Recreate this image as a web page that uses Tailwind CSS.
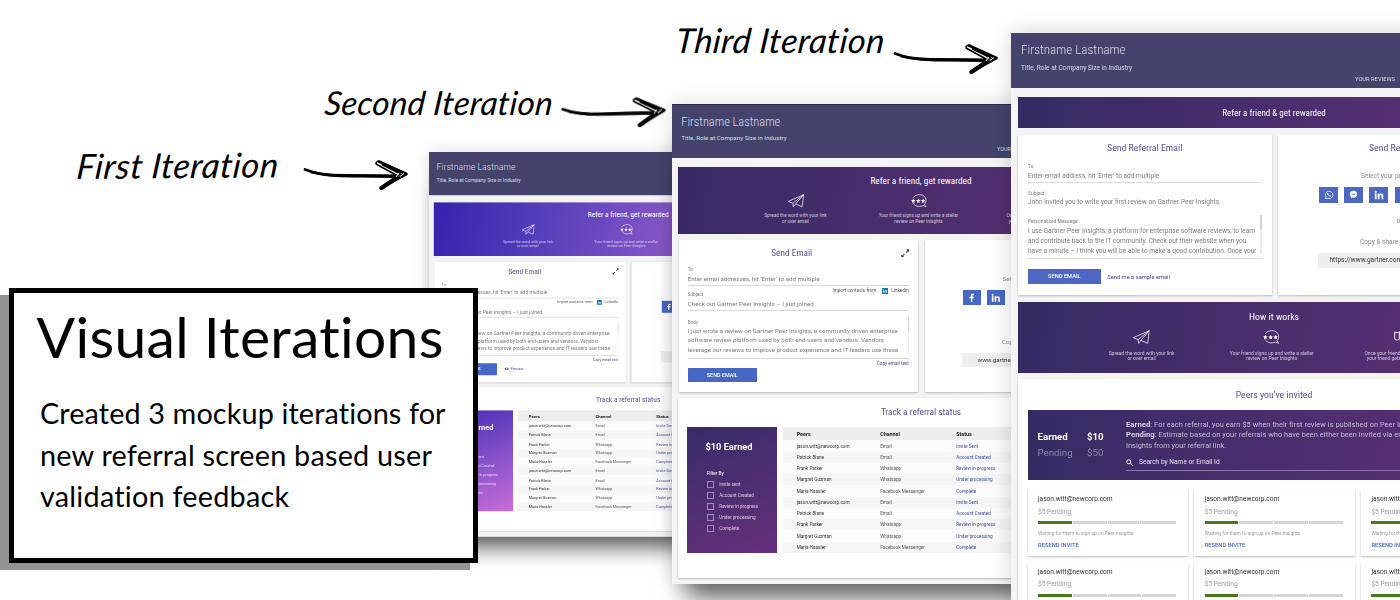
<!DOCTYPE html>
<html lang="en">
<head>
<meta charset="utf-8">
<title>Visual Iterations</title>
<script src="https://cdn.jsdelivr.net/npm/@tailwindcss/browser@4"></script>
</head>
<body class="relative h-[600px] w-[1400px] overflow-hidden bg-white font-[Roboto,sans-serif] text-[#7c7c7c]">

<svg class="hidden">
  <symbol id="plane" viewBox="-1 -1 50 42"><path d="M48 1 0 22l14 6L48 1l-5 38-20-9L48 1M14 28l2 11 7-9" fill="none" stroke="#fff" stroke-width="2.2" stroke-linejoin="round"/></symbol>
  <symbol id="chat" viewBox="-1 -1 50 42">
    <path d="M5 11C10 4 18 1 26 1c12 0 20 8 20 18 0 5-2 9-5 12l5 8-9-4c-14 6-26 2-32-8" fill="none" stroke="#fff" stroke-width="2.2"/>
    <path d="m6 13 2 5 5 .500-4 3.500 1.500 5L6 24.500 1.500 27 3 22l-4-3.500 5-.500zM22 13l2 5 5 .500-4 3.500 1.500 5-4.500-2.500-4.500 2.500L19 22l-4-3.500 5-.500zM37 13l2 5 5 .500-4 3.500 1.500 5-4.500-2.500-4.500 2.500L34 22l-4-3.500 5-.500z" fill="#fff"/>
  </symbol>
  <symbol id="reward" viewBox="-1 -1 50 42"><path d="M1 5c6 3 9 3 14-1v22c-5 4-8 4-14 1zM15 10l14-5 16 8-3 18-16 7-11-10M22 16l10 14" fill="none" stroke="#fff" stroke-width="2.800"/></symbol>
  <symbol id="expand" viewBox="0 0 24 24"><path d="M15 1h8v8l-3-3-5 5-2-2 5-5zM9 23H1v-8l3 3 5-5 2 2-5 5z" fill="#333"/></symbol>
  <symbol id="facebook" viewBox="0 0 24 24"><path d="M13.600 22v-9h3.200l.500-3.800h-3.700V7.100c0-1.100.400-1.700 1.900-1.700h2V2.200C17 2.100 16 2 14.700 2 11.600 2 9.600 3.700 9.600 6.800v2.400H6.500V13h3.100v9z" fill="#fff"/></symbol>
  <symbol id="linkedin" viewBox="0 0 24 24"><path d="M2 8.500h4.300V22H2zM4.100 2a2.500 2.500 0 1 1 0 5 2.500 2.500 0 0 1 0-5zM9 8.500h4.100v1.900c.700-1.200 2.200-2.200 4.200-2.200 4.200 0 5 2.600 5 6.200V22H18v-6.700c0-1.700 0-3.500-2.200-3.500s-2.500 1.700-2.500 3.400V22H9z" fill="#fff"/></symbol>
  <symbol id="whatsapp" viewBox="0 0 24 24"><path d="m3 21 1.400-4.800A9 9 0 1 1 8 19.800z" fill="none" stroke="#fff" stroke-width="1.800"/><path d="M8.500 7.200c-1.600 1-1 3.500 1.300 6 2.500 2.500 5.200 3.500 6.500 1.900.400-.700.300-1.300 0-1.500l-2-1-1.300 1.200c-1.300-.600-2.300-1.500-2.900-2.800l1-1.100-.900-2.300c-.300-.600-1-.700-1.700-.400z" fill="#fff"/></symbol>
  <symbol id="messenger" viewBox="0 0 24 24"><path d="M12 2C6.300 2 2 6.100 2 11.300c0 2.900 1.300 5.300 3.500 7V22l3.200-1.800c1 .300 2.100.400 3.300.400 5.700 0 10-4.100 10-9.300S17.700 2 12 2z" fill="#fff"/><path d="m5.800 14 5-5.300 2.600 2.400 4.800-2.400-5 5.300-2.600-2.500z" fill="#4667c4"/></symbol>
  <symbol id="eye" viewBox="0 0 24 16"><path d="M0 8C5-1 19-1 24 8c-5 9-19 9-24 0z" fill="#7e57b5"/><circle cx="12" cy="8" r="3" fill="#fff"/></symbol>
  <symbol id="search" viewBox="0 0 24 24"><circle cx="9" cy="9" r="6.500" fill="none" stroke="#fff" stroke-width="3"/><path d="m14 14 8 8" stroke="#fff" stroke-width="3.500"/></symbol>
  <symbol id="arrow" viewBox="0 0 106 32">
    <path d="M2 9.500C14 14.500 26 15.500 42 15.500L94 16" fill="none" stroke="#000" stroke-width="2.800" stroke-linecap="round"/>
    <path d="M8 12C22 16 40 16.500 60 16L94 16.500" fill="none" stroke="#000" stroke-width="2.800"/>
    <path d="M75 1.300c-2.500.700-2.500 2.700-.700 3.500L94 15.500l9-2z" fill="#fff" stroke="#000" stroke-width="1.700" stroke-linejoin="round"/>
    <path d="M76 1.500 103.500 14M80 4.500l17 8.500M78 28 103.500 14" fill="none" stroke="#000" stroke-width="2.600" stroke-linecap="round"/>
    <path d="M78.500 28 94 17.500" stroke="#000" stroke-width="4.400" stroke-linecap="round"/>
    <path d="m93 17 3-4M97 16.500l4-3" stroke="#fff" stroke-width="1"/>
  </symbol>
</svg>

<!-- Handwritten labels and their arrows -->
<div class="absolute left-[77px] top-[143.500px] origin-left -rotate-[0.500deg] -skew-x-6 whitespace-nowrap font-[Lato,sans-serif] text-[34.500px] italic leading-[44px] tracking-[0.550px] text-black [font-variant-ligatures:none]">First Iteration</div>
<div class="absolute left-[324.500px] top-[80px] origin-left -skew-x-6 whitespace-nowrap font-[Lato,sans-serif] text-[33px] italic leading-[44px] tracking-[0.300px] text-black [font-variant-ligatures:none]">Second Iteration</div>
<div class="absolute left-[675.500px] top-[18px] origin-left -skew-x-6 whitespace-nowrap font-[Lato,sans-serif] text-[34.200px] italic leading-[44px] tracking-[0.450px] text-black [font-variant-ligatures:none]">Third Iteration</div>

<section id="first" class="absolute left-[429px] top-[151.500px] h-[480px] w-[498px] origin-top-left scale-80"></section>
<section id="second" class="absolute left-[672px] top-[103.500px] h-[480px] w-[498px]"></section>

<!-- Third iteration -->
<section class="absolute left-[1011px] top-[33px] h-[640px] w-[526px] bg-[#f4f4f4] shadow-[0_0_20px_rgba(0,0,0,0.18)]">
  <header class="h-[54.500px] bg-[#43436b] pl-[10px] pt-[9px] text-[#dcdce8]">
    <div class="text-[13.100px] font-light leading-[16px] [font-stretch:75%]">Firstname Lastname</div>
    <div class="mt-[5.800px] text-[6.570px] leading-[8px]">Title, Role at Company Size in Industry</div>
    <div class="mt-[3px] pl-[334px] text-[5.770px] leading-[8px]">YOUR REVIEWS</div>
  </header>
  <div class="mx-[7px] mt-[9.700px] h-[31px] bg-linear-100 from-[#362b64] to-[#5e2f75] text-center text-[9.050px] leading-[32px] text-white [font-stretch:75%]">Refer a friend &amp; get rewarded</div>
  <div class="mx-[7px] mt-[6.800px] flex h-[160px] gap-[6.500px]">
    <div class="w-[253.500px] shrink-0 bg-white px-[10px] pt-[6px] shadow-[0_0.500px_2px_rgba(0,0,0,0.25)]">
      <div class="text-center text-[9.800px] leading-[14px] text-[#54549a] [font-stretch:75%]">Send Referral Email</div>
      <div class="mt-[8px] text-[4.940px] leading-[6px]">To</div>
      <div class="mt-[3px] text-[6.510px] leading-[8px]">Enter email address, hit 'Enter' to add multiple</div>
      <div class="mt-[2.200px] h-[1px] bg-[#dadada]"></div>
      <div class="mt-[6.500px] text-[4.940px] leading-[6px]">Subject</div>
      <div class="mt-[2.300px] text-[6.570px] leading-[8px]">John invited you to write your first review on Gartner Peer Insights</div>
      <div class="mt-[9.500px] flex h-[39px] justify-between overflow-hidden">
        <div class="whitespace-nowrap pt-[2.800px]">
          <div class="text-[4.940px] leading-[6px]">Personalized Message</div>
          <div class="mt-[1.500px] text-[6.570px] leading-[10.250px]">I use Gartner Peer Insights, a platform for enterprise software reviews, to learn<br>and contribute back to the IT community. Check out their website when you<br>have a minute – I think you will be able to make a good contribution. Once your</div>
        </div>
        <div class="w-[1.500px] bg-[#ededed]"><div class="h-[14px] bg-[#d2d2d2]"></div></div>
      </div>
      <div class="mt-[4px] h-[1px] bg-[#dadada]"></div>
      <div class="mt-[10px] flex items-center gap-[6.600px]">
        <div class="h-[15px] w-[72.700px] rounded-[0.500px] bg-[#4c68c2] text-center text-[5.700px] font-medium leading-[15.500px] text-white">SEND EMAIL</div>
        <div class="text-[5.760px] leading-[8px] text-[#4a4a98]">Send me a sample email</div>
      </div>
    </div>
    <div class="w-[252px] shrink-0 bg-white pt-[6px] shadow-[0_0.500px_2px_rgba(0,0,0,0.25)]">
      <div class="text-center text-[9.800px] leading-[14px] text-[#54549a] [font-stretch:75%]">Send Referral Link</div>
      <div class="mt-[17px] pl-[83px] text-[6.570px] leading-[8px] text-[#8a8a8a]">Select your preferred channel</div>
      <div class="mt-[7px] flex gap-[6.200px] pl-[41px]">
        <div class="flex h-[16px] w-[19px] items-center justify-center bg-[#4c68c2]"><svg class="size-[10px]"><use href="#whatsapp"/></svg></div>
        <div class="flex h-[16px] w-[19px] items-center justify-center bg-[#4c68c2]"><svg class="size-[9px]"><use href="#messenger"/></svg></div>
        <div class="flex h-[16px] w-[19px] items-center justify-center bg-[#4c68c2]"><svg class="size-[10px]"><use href="#linkedin"/></svg></div>
        <div class="flex h-[16px] w-[19px] items-center justify-center bg-[#4c68c2]"><svg class="size-[10px]"><use href="#facebook"/></svg></div>
      </div>
      <div class="mt-[14px] pl-[118.500px] text-[6.570px] leading-[8px] text-[#8a8a8a]">or</div>
      <div class="mt-[13.300px] pl-[82px] text-[6.570px] leading-[8px] text-[#8a8a8a]">Copy &amp; share your link</div>
      <div class="ml-[40px] mt-[7px] h-[15px] w-[170px] bg-[#eee] pl-[11.500px] text-[6.570px] leading-[15.500px] text-[#333]">https://www.gartner.com/reviews</div>
    </div>
  </div>
  <div class="mx-[7px] mt-[6.700px] h-[71px] bg-linear-100 from-[#362b64] to-[#5e2f75] pt-[8px] text-center text-[#cfc9de]">
    <div class="text-[9.770px] leading-[14px] text-white [font-stretch:75%]">How it works</div>
    <div class="ml-[58.500px] mt-[6.500px] flex">
      <div class="flex w-[130.200px] flex-col items-center text-[4.940px] leading-[5.800px]"><svg class="mb-[6.500px] h-[14px] w-[16.700px]"><use href="#plane"/></svg>Spread the word with your link<br>or over email</div>
      <div class="flex w-[130.200px] flex-col items-center text-[4.940px] leading-[5.800px]"><svg class="mb-[6.500px] h-[14px] w-[16.700px]"><use href="#chat"/></svg>Your friend signs up and write a stellar<br>review on Peer Inisghts</div>
      <div class="flex w-[130.200px] flex-col items-center whitespace-nowrap text-[4.940px] leading-[5.800px]"><svg class="mb-[6.500px] h-[14px] w-[16.700px]"><use href="#reward"/></svg><span class="pl-[7px]">Once your friend's review is published<br>your friend gets a reward and so do</span></div>
    </div>
  </div>
  <div class="mx-[7px] mt-[6.600px] bg-white px-[9.500px] pt-[8px] shadow-[0_0.500px_2px_rgba(0,0,0,0.25)]">
    <div class="text-center text-[9.840px] leading-[15px] text-[#54549a] [font-stretch:75%]">Peers you've invited</div>
    <div class="mt-[7.700px] flex h-[70px] bg-linear-100 from-[#362b64] to-[#5e2f75] pl-[10px]">
      <div class="grid w-[88.500px] shrink-0 grid-cols-[49.500px_1fr] content-start pt-[19.500px] text-[9.700px] leading-[15.700px] text-[#8d86ab]">
        <b class="text-white">Earned</b><b class="text-white">$10</b><span>Pending</span><span>$50</span>
      </div>
      <div class="whitespace-nowrap pt-[10px] text-[7.400px] leading-[10.350px] text-[#c3bcd4]">
        <div class="tracking-[0.050px]"><span class="text-[7.700px] font-bold text-[#d8d3e4]">Earned</span>: For each referral, you earn $5 when their first review is published on Peer Insights.</div>
        <div class="tracking-[0.050px]"><span class="text-[7.700px] font-bold text-[#d8d3e4]">Pending</span>: Estimate based on your referrals who have been either been invited via email or joined</div>
        <div>Insights from your referral link.</div>
        <div class="mt-[6.500px] flex h-[14px] items-start gap-[5.500px] border-b border-[#8a78a5] text-[6.600px] leading-[11px] text-[#e4e0ee]"><svg class="mt-[1.500px] size-[7.500px]"><use href="#search"/></svg>Search by Name or Email Id</div>
      </div>
    </div>
    <div id="invites" class="mt-[10px] grid w-[500px] grid-cols-[repeat(3,160.500px)] gap-x-[6.200px] gap-y-[6.500px]"></div>
  </div>
</section>

<svg class="absolute left-[303px] top-[160px] h-[32px] w-[106px]"><use href="#arrow"/></svg>
<svg class="absolute left-[561px] top-[97.500px] h-[32px] w-[106px] -rotate-2"><use href="#arrow"/></svg>
<svg class="absolute left-[893px] top-[43.500px] h-[32px] w-[106px]"><use href="#arrow"/></svg>

<!-- Title card -->
<div class="absolute left-0 top-[295px] h-[275px] w-[469.500px] bg-[#949494]"></div>
<div class="absolute left-[8.500px] top-[288.400px] h-[274.500px] w-[469.500px] border-[5px] border-black bg-white font-[Lato,sans-serif] text-black [font-variant-ligatures:none]">
  <h1 class="whitespace-nowrap pl-[23px] pt-[8.500px] text-[57px] leading-[68px] tracking-[0.320px]">Visual Iterations</h1>
  <p class="whitespace-nowrap pl-[26.500px] pt-[23.500px] text-[28.800px] leading-[41.200px] tracking-[0.120px]">Created 3 mockup iterations for<br><span class="tracking-[0.230px]">new referral screen based user</span><br><span class="tracking-[0.240px]">validation feedback</span></p>
</div>

<script>
const people = [
  ["jason.witt@newcorp.com", "Email", "Invite Sent"],
  ["Patrick Blane", "Email", "Account Created"],
  ["Frank Parker", "Whatsapp", "Review in progress"],
  ["Margret Guzman", "Whatsapp", "Under processing"],
  ["Maria Hassler", "Facebook Messenger", "Complete"],
];
const filters = ["Invite sent", "Account Created", "Review in progress", "Under processing", "Complete"];

const page = ({ banner, panel, preview, topLine }) => `
<div class="flex h-[480.500px] flex-col bg-[#f4f4f4] shadow-[0_28px_24px_-14px_rgba(0,0,0,0.6),0_0_20px_rgba(0,0,0,0.14)]">
  <header class="h-[54px] shrink-0 border-t ${topLine} bg-[#43436b] pl-[9.300px] pt-[9px] text-[#dcdce8]">
    <div class="text-[12.400px] font-light leading-[16px] [font-stretch:75%]">Firstname Lastname</div>
    <div class="mt-[4.500px] text-[6.230px] leading-[8px]">Title, Role at Company Size in Industry</div>
    <div class="mt-[2.800px] pl-[315.700px] text-[5.450px] leading-[8px]">YOUR REVIEWS</div>
  </header>
  <div class="mx-[6px] mt-[9.300px] h-[67px] shrink-0 bg-linear-100 ${banner} pt-[7.500px] text-center">
    <div class="text-[9.300px] leading-[14px] text-white [font-stretch:75%]">Refer a friend, get rewarded</div>
    <div class="ml-[56px] mt-[5.500px] flex text-[4.690px] leading-[5.400px] text-white/75">
      <div class="flex w-[123px] flex-col items-center"><svg class="mb-[6px] h-[13.500px] w-[16px]"><use href="#plane"/></svg>Spread the word with your link<br>or over email</div>
      <div class="flex w-[123px] flex-col items-center"><svg class="mb-[6px] h-[13.500px] w-[16px]"><use href="#chat"/></svg>Your friend signs up and write a stellar<br>review on Peer Inisghts</div>
      <div class="flex w-[123px] flex-col items-center whitespace-nowrap"><svg class="mb-[6px] h-[13.500px] w-[16px]"><use href="#reward"/></svg><span class="pl-[8px]">Once your friend's review is published<br>your friend gets a reward and so do</span></div>
    </div>
  </div>
  <div class="mx-[6.500px] mt-[6.500px] flex h-[151.300px] shrink-0 gap-[6.500px]">
    <div class="w-[239.500px] shrink-0 bg-white px-[9.300px] pt-[5.800px] shadow-[0_0.500px_2px_rgba(0,0,0,0.25)]">
      <div class="grid grid-cols-[8px_1fr_8px] items-center text-center text-[9.350px] leading-[14px] text-[#54549a] [font-stretch:75%]"><i></i><span class="pr-[13px]">Send Email</span><svg class="size-[8.500px]"><use href="#expand"/></svg></div>
      <div class="mt-[6.700px] text-[4.680px] leading-[6px]">To</div>
      <div class="mt-[2px] text-[6.230px] leading-[8px]">Enter email addresses, hit 'Enter' to add multiple</div>
      <div class="mt-[2.500px] h-[1px] bg-[#dadada]"></div>
      <div class="mt-[2px] flex h-[10px] justify-between text-[4.630px] leading-[6px]">
        <span class="self-end">Subject</span>
        <span class="flex h-[6px] items-center text-[#555]">Import contacts from:<span class="ml-[5px] mr-[3px] flex size-[6px] items-center justify-center bg-[#1279b8]"><svg class="size-[4px]"><use href="#linkedin"/></svg></span>LinkedIn</span>
      </div>
      <div class="mt-[1.400px] text-[6.200px] leading-[8px]">Check out Gartner Peer Insights – I just joined</div>
      <div class="mt-[2.200px] h-[1px] bg-[#dadada]"></div>
      <div class="mt-[5.800px] flex h-[38.500px] justify-between overflow-hidden">
        <div class="whitespace-nowrap pt-[3px]">
          <div class="text-[4.680px] leading-[6px]">Body</div>
          <div class="mt-[0.900px] text-[6.220px] leading-[9.700px]">I just wrote a review on Gartner Peer Insights, a community-driven enterprise<br>software review platform used by both end-users and vendors. Vendors<br>leverage our reviews to improve product experience and IT leaders use these</div>
        </div>
        <div class="w-[1.200px] bg-[#ededed]"><div class="h-[14px] bg-[#d2d2d2]"></div></div>
      </div>
      <div class="mt-[2.600px] h-[1px] bg-[#dadada]"></div>
      <div class="mt-[2.200px] text-right text-[4.660px] leading-[6px] text-[#4a4a98]">Copy email text</div>
      <div class="mt-[0.900px] flex items-center">
        <div class="h-[14.200px] w-[69px] rounded-[0.500px] bg-[#4667c4] text-center text-[5.420px] font-medium leading-[14.200px] text-white">SEND EMAIL</div>
        ${preview ? '<svg class="ml-[9px] mr-[2px] h-[4px] w-[6px]"><use href="#eye"/></svg><span class="text-[4.660px] leading-[6px] text-[#4a4a98]">Preview</span>' : ''}
      </div>
    </div>
    <div class="w-[239px] shrink-0 bg-white pt-[5.800px] shadow-[0_0.500px_2px_rgba(0,0,0,0.25)]">
      <div class="text-center text-[9.350px] leading-[14px] text-[#54549a] [font-stretch:75%]">Send Referral Link</div>
      <div class="mt-[14.700px] pl-[78px] text-[6.230px] leading-[8px] text-[#8a8a8a]">Select your preferred channel</div>
      <div class="mt-[7px] flex gap-[6px] pl-[38.500px]">
        <div class="flex h-[15px] w-[18px] items-center justify-center bg-[#4667c4]"><svg class="size-[9.500px]"><use href="#facebook"/></svg></div>
        <div class="flex h-[15px] w-[18px] items-center justify-center bg-[#4667c4]"><svg class="size-[9.500px]"><use href="#linkedin"/></svg></div>
        <div class="flex h-[15px] w-[18px] items-center justify-center bg-[#4667c4]"><svg class="size-[9.500px]"><use href="#whatsapp"/></svg></div>
      </div>
      <div class="mt-[33px] pl-[77.500px] text-[6.230px] leading-[8px] text-[#8a8a8a]">Copy &amp; share your link</div>
      <div class="ml-[37.500px] mt-[7px] h-[14px] w-[160px] bg-[#eee] pl-[15.500px] text-[6.230px] leading-[14px] text-[#333]">www.gartner.com/reviews</div>
    </div>
  </div>
  <div class="mx-[6px] mt-[6.300px] h-[180px] shrink-0 bg-white px-[9.300px] pt-[7.500px] shadow-[0_0.500px_2px_rgba(0,0,0,0.25)]">
    <div class="text-center text-[9.300px] leading-[14px] text-[#54549a] [font-stretch:75%]">Track a referral status</div>
    <div class="mt-[7.500px] flex gap-[6px]">
      <div class="h-[126px] w-[89.700px] shrink-0 bg-linear-160 ${panel} pl-[18.200px] pt-[13.500px] text-[4.670px] text-white/75">
        <div class="text-[9.220px] font-bold leading-[14px] text-white">$10 Earned</div>
        <div class="ml-[1.300px] mt-[15.500px] font-medium leading-[7px] text-white/90">Filter By</div>
        <div class="ml-[1.300px] mt-[2.400px]">${filters.map(f => `<div class="flex h-[10.950px] items-center gap-[5.700px]"><i class="size-[6.800px] border-[0.800px] border-white/45"></i>${f}</div>`).join("")}</div>
      </div>
      <div class="grow text-[4.690px]">
        <div class="grid h-[13.500px] grid-cols-[83.500px_76px_1fr] items-center bg-[#eee] pl-[13.700px] text-[5.390px] font-bold text-[#222]"><span>Peers</span><span>Channel</span><span>Status</span></div>
        ${[...people, ...people].map(([n, c, s], i) => `<div class="grid h-[11.250px] grid-cols-[83.500px_76px_1fr] items-center pl-[13.700px] text-[#333] ${i % 2 ? 'bg-[#f5f5f5]' : 'bg-[#fbfbfb]'}"><span>${n}</span><span class="text-[#5a5a5a]">${c}</span><span class="text-[#3f51a5]">${s}</span></div>`).join("")}
      </div>
    </div>
  </div>
</div>`;

document.getElementById("first").innerHTML = page({ banner: "from-[#3222ae] to-[#c26ed6]", panel: "from-[#4529b4] to-[#c86cd8]", preview: true, topLine: "border-[#43436b]" });
document.getElementById("second").innerHTML = page({ banner: "from-[#382a66] to-[#5e3074]", panel: "from-[#382c68] to-[#652f7a]", preview: false, topLine: "border-[#2c2c4c]" });
document.getElementById("invites").innerHTML = Array(6).fill(`
<div class="h-[66.300px] bg-white pl-[10.500px] pr-[12px] pt-[5px] shadow-[0_0.500px_2px_rgba(0,0,0,0.28)]">
  <div class="text-[6.620px] leading-[8px] text-[#333]">jason.witt@newcorp.com</div>
  <div class="mt-[4.700px] text-[6.600px] leading-[8px] text-[#9a9a9a]">$5 Pending</div>
  <div class="mt-[5.500px] flex h-[2.700px] gap-[1px]"><i class="grow bg-[#45791c]"></i><i class="grow bg-[#d4d4d4]"></i><i class="grow bg-[#d4d4d4]"></i><i class="grow bg-[#d4d4d4]"></i></div>
  <div class="mt-[6px] text-[4.930px] leading-[6px] text-[#9a9a9a]">Waiting for them to sign up on Peer Insights</div>
  <div class="mt-[5.500px] text-[5.770px] font-medium leading-[8px] text-[#4667c4]">RESEND INVITE</div>
</div>`).join("");
</script>
</body>
</html>
